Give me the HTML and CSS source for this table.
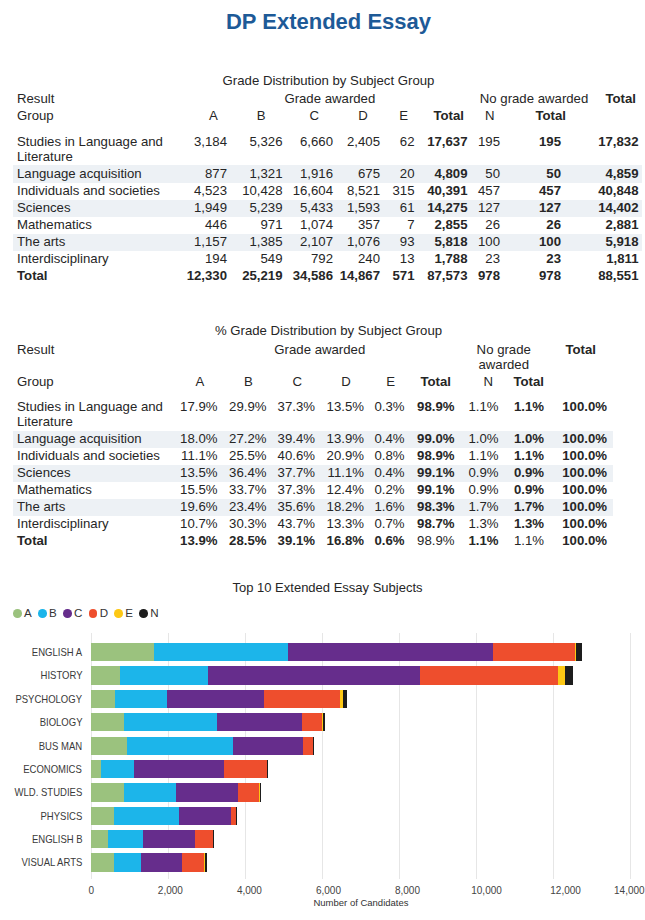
FILE: index.html
```html
<!DOCTYPE html>
<html lang="en">
<head>
<meta charset="utf-8">
<title>DP Extended Essay</title>
<link rel="stylesheet" href="styles.css">
</head>
<body>
<h1 class="title">DP Extended Essay</h1>

<div class="caption cap1">Grade Distribution by Subject Group</div>
<div class="tbl t1">
  <div class="row head1">
    <div class="lbl">Result</div>
    <div class="span6 ga">Grade awarded</div>
    <div class="span2 ng1">No grade awarded</div>
    <div class="ht gt">Total</div>
  </div>
  <div class="row">
    <div class="lbl">Group</div>
    <div class="hc">A</div><div class="hc">B</div><div class="hc">C</div><div class="hc">D</div><div class="hc">E</div>
    <div class="ht">Total</div><div class="hn">N</div><div class="ht over">Total</div><div></div>
  </div>
  <div class="row first">
    <div class="lbl">Studies in Language and Literature</div>
    <div class="num">3,184</div><div class="num">5,326</div><div class="num">6,660</div><div class="num">2,405</div><div class="num">62</div>
    <div class="num b">17,637</div><div class="num">195</div><div class="num b">195</div><div class="num b">17,832</div>
  </div>
  <div class="row shade">
    <div class="lbl">Language acquisition</div>
    <div class="num">877</div><div class="num">1,321</div><div class="num">1,916</div><div class="num">675</div><div class="num">20</div>
    <div class="num b">4,809</div><div class="num">50</div><div class="num b">50</div><div class="num b">4,859</div>
  </div>
  <div class="row">
    <div class="lbl">Individuals and societies</div>
    <div class="num">4,523</div><div class="num">10,428</div><div class="num">16,604</div><div class="num">8,521</div><div class="num">315</div>
    <div class="num b">40,391</div><div class="num">457</div><div class="num b">457</div><div class="num b">40,848</div>
  </div>
  <div class="row shade">
    <div class="lbl">Sciences</div>
    <div class="num">1,949</div><div class="num">5,239</div><div class="num">5,433</div><div class="num">1,593</div><div class="num">61</div>
    <div class="num b">14,275</div><div class="num">127</div><div class="num b">127</div><div class="num b">14,402</div>
  </div>
  <div class="row">
    <div class="lbl">Mathematics</div>
    <div class="num">446</div><div class="num">971</div><div class="num">1,074</div><div class="num">357</div><div class="num">7</div>
    <div class="num b">2,855</div><div class="num">26</div><div class="num b">26</div><div class="num b">2,881</div>
  </div>
  <div class="row shade">
    <div class="lbl">The arts</div>
    <div class="num">1,157</div><div class="num">1,385</div><div class="num">2,107</div><div class="num">1,076</div><div class="num">93</div>
    <div class="num b">5,818</div><div class="num">100</div><div class="num b">100</div><div class="num b">5,918</div>
  </div>
  <div class="row">
    <div class="lbl">Interdisciplinary</div>
    <div class="num">194</div><div class="num">549</div><div class="num">792</div><div class="num">240</div><div class="num">13</div>
    <div class="num b">1,788</div><div class="num">23</div><div class="num b">23</div><div class="num b">1,811</div>
  </div>
  <div class="row">
    <div class="lbl b">Total</div>
    <div class="num b">12,330</div><div class="num b">25,219</div><div class="num b">34,586</div><div class="num b">14,867</div><div class="num b">571</div>
    <div class="num b">87,573</div><div class="num b">978</div><div class="num b">978</div><div class="num b">88,551</div>
  </div>
</div>

<div class="caption cap2">% Grade Distribution by Subject Group</div>
<div class="tbl t2">
  <div class="row head1">
    <div class="lbl">Result</div>
    <div class="span6 ga">Grade awarded</div>
    <div class="span2 ng2">No grade awarded</div>
    <div class="hc gt b">Total</div>
  </div>
  <div class="row">
    <div class="lbl">Group</div>
    <div class="hc">A</div><div class="hc">B</div><div class="hc">C</div><div class="hc">D</div><div class="hc">E</div>
    <div class="ht">Total</div><div class="hn">N</div><div class="ht flush">Total</div><div></div>
  </div>
  <div class="row first">
    <div class="lbl">Studies in Language and Literature</div>
    <div class="num">17.9%</div><div class="num">29.9%</div><div class="num">37.3%</div><div class="num">13.5%</div><div class="num">0.3%</div>
    <div class="num b">98.9%</div><div class="num">1.1%</div><div class="num b">1.1%</div><div class="num b">100.0%</div>
  </div>
  <div class="row shade">
    <div class="lbl">Language acquisition</div>
    <div class="num">18.0%</div><div class="num">27.2%</div><div class="num">39.4%</div><div class="num">13.9%</div><div class="num">0.4%</div>
    <div class="num b">99.0%</div><div class="num">1.0%</div><div class="num b">1.0%</div><div class="num b">100.0%</div>
  </div>
  <div class="row">
    <div class="lbl">Individuals and societies</div>
    <div class="num">11.1%</div><div class="num">25.5%</div><div class="num">40.6%</div><div class="num">20.9%</div><div class="num">0.8%</div>
    <div class="num b">98.9%</div><div class="num">1.1%</div><div class="num b">1.1%</div><div class="num b">100.0%</div>
  </div>
  <div class="row shade">
    <div class="lbl">Sciences</div>
    <div class="num">13.5%</div><div class="num">36.4%</div><div class="num">37.7%</div><div class="num">11.1%</div><div class="num">0.4%</div>
    <div class="num b">99.1%</div><div class="num">0.9%</div><div class="num b">0.9%</div><div class="num b">100.0%</div>
  </div>
  <div class="row">
    <div class="lbl">Mathematics</div>
    <div class="num">15.5%</div><div class="num">33.7%</div><div class="num">37.3%</div><div class="num">12.4%</div><div class="num">0.2%</div>
    <div class="num b">99.1%</div><div class="num">0.9%</div><div class="num b">0.9%</div><div class="num b">100.0%</div>
  </div>
  <div class="row shade">
    <div class="lbl">The arts</div>
    <div class="num">19.6%</div><div class="num">23.4%</div><div class="num">35.6%</div><div class="num">18.2%</div><div class="num">1.6%</div>
    <div class="num b">98.3%</div><div class="num">1.7%</div><div class="num b">1.7%</div><div class="num b">100.0%</div>
  </div>
  <div class="row">
    <div class="lbl">Interdisciplinary</div>
    <div class="num">10.7%</div><div class="num">30.3%</div><div class="num">43.7%</div><div class="num">13.3%</div><div class="num">0.7%</div>
    <div class="num b">98.7%</div><div class="num">1.3%</div><div class="num b">1.3%</div><div class="num b">100.0%</div>
  </div>
  <div class="row">
    <div class="lbl b">Total</div>
    <div class="num b">13.9%</div><div class="num b">28.5%</div><div class="num b">39.1%</div><div class="num b">16.8%</div><div class="num b">0.6%</div>
    <div class="num">98.9%</div><div class="num b">1.1%</div><div class="num">1.1%</div><div class="num b">100.0%</div>
  </div>
</div>

<div class="chart-title">Top 10 Extended Essay Subjects</div>
<div class="legend">
  <div class="item"><span class="dot sa"></span>A</div>
  <div class="item"><span class="dot sb"></span>B</div>
  <div class="item"><span class="dot sc"></span>C</div>
  <div class="item"><span class="dot sd"></span>D</div>
  <div class="item"><span class="dot se"></span>E</div>
  <div class="item"><span class="dot sn"></span>N</div>
</div>

<div class="plot">
  <div class="cat"><span>ENGLISH A</span></div>
  <div class="bar"><span class="sa" style="width:11.614%"></span><span class="sb" style="width:24.829%"></span><span class="sc" style="width:37.986%"></span><span class="sd" style="width:15.2%"></span><span class="se" style="width:0.307%"></span><span class="sn" style="width:1.121%"></span></div>
  <div class="cat"><span>HISTORY</span></div>
  <div class="bar"><span class="sa" style="width:5.257%"></span><span class="sb" style="width:16.307%"></span><span class="sc" style="width:39.464%"></span><span class="sd" style="width:25.5%"></span><span class="se" style="width:1.243%"></span><span class="sn" style="width:1.607%"></span></div>
  <div class="cat"><span>PSYCHOLOGY</span></div>
  <div class="bar"><span class="sa" style="width:4.393%"></span><span class="sb" style="width:9.693%"></span><span class="sc" style="width:17.914%"></span><span class="sd" style="width:14.143%"></span><span class="se" style="width:0.55%"></span><span class="sn" style="width:0.807%"></span></div>
  <div class="cat"><span>BIOLOGY</span></div>
  <div class="bar"><span class="sa" style="width:6%"></span><span class="sb" style="width:17.236%"></span><span class="sc" style="width:15.807%"></span><span class="sd" style="width:3.7%"></span><span class="se" style="width:0.143%"></span><span class="sn" style="width:0.357%"></span></div>
  <div class="cat"><span>BUS MAN</span></div>
  <div class="bar"><span class="sa" style="width:6.614%"></span><span class="sb" style="width:19.643%"></span><span class="sc" style="width:13.029%"></span><span class="sd" style="width:1.736%"></span><span class="se" style="width:0.071%"></span><span class="sn" style="width:0.229%"></span></div>
  <div class="cat"><span>ECONOMICS</span></div>
  <div class="bar"><span class="sa" style="width:1.85%"></span><span class="sb" style="width:6.007%"></span><span class="sc" style="width:16.729%"></span><span class="sd" style="width:7.907%"></span><span class="se" style="width:0.043%"></span><span class="sn" style="width:0.143%"></span></div>
  <div class="cat"><span>WLD. STUDIES</span></div>
  <div class="bar"><span class="sa" style="width:6.057%"></span><span class="sb" style="width:9.636%"></span><span class="sc" style="width:11.429%"></span><span class="sd" style="width:4.007%"></span><span class="se" style="width:0.071%"></span><span class="sn" style="width:0.243%"></span></div>
  <div class="cat"><span>PHYSICS</span></div>
  <div class="bar"><span class="sa" style="width:4.15%"></span><span class="sb" style="width:12.1%"></span><span class="sc" style="width:9.636%"></span><span class="sd" style="width:0.864%"></span><span class="se" style="width:0.057%"></span><span class="sn" style="width:0.193%"></span></div>
  <div class="cat"><span>ENGLISH B</span></div>
  <div class="bar"><span class="sa" style="width:3.093%"></span><span class="sb" style="width:6.429%"></span><span class="sc" style="width:9.75%"></span><span class="sd" style="width:3.336%"></span><span class="se" style="width:0.043%"></span><span class="sn" style="width:0.143%"></span></div>
  <div class="cat"><span>VISUAL ARTS</span></div>
  <div class="bar"><span class="sa" style="width:4.15%"></span><span class="sb" style="width:5.057%"></span><span class="sc" style="width:7.6%"></span><span class="sd" style="width:4.021%"></span><span class="se" style="width:0.293%"></span><span class="sn" style="width:0.371%"></span></div>
</div>
<div class="ticks">
  <span>0</span><span>2,000</span><span>4,000</span><span>6,000</span><span>8,000</span><span>10,000</span><span>12,000</span><span>14,000</span>
</div>
<div class="axis-title">Number of Candidates</div>
</body>
</html>
```
FILE: styles.css
```css
* { box-sizing: border-box; }
html, body { margin: 0; padding: 0; }
body {
  font-family: "Liberation Sans", Arial, sans-serif;
  color: #262626;
  background: #fff;
  width: 645px;
}
.title {
  margin: 0;
  padding: 9px 0 0 12px;
  line-height: 26px;
  font-size: 22px;
  font-weight: bold;
  color: #1d5a97;
  text-align: center;
}
.caption {
  font-size: 13.2px;
  line-height: 17px;
  text-align: center;
  padding-left: 12px;
}
.cap1 { margin-top: 36.5px; }
.cap2 { margin-top: 37px; }

.tbl { margin-left: 13px; font-size: 13.2px; }
.t1 { width: 629px; }
.t2 { width: 600px; }
.row {
  display: grid;
  line-height: 14.5px;
  padding: 1.3px 0;
}
.t1 .row { grid-template-columns: 173.6px 40.4px 55.5px 50.5px 47px 34.5px 53px 32.5px 61px 77.5px 3.5px; }
.t2 .row { grid-template-columns: 156.5px 48px 49px 48.5px 49px 40.5px 50px 44px 45.5px 63px 6px; }
.row.head1 { margin-top: 2.6px; }
.row.first { margin-top: 8.6px; }
.row.shade { background: #edf1f5; }
.lbl { padding-left: 4px; }
.num { text-align: right; white-space: nowrap; }
.b { font-weight: bold; }
.hc { text-align: center; padding-left: 13px; }
.ht { text-align: right; font-weight: bold; padding-right: 3.5px; }
.ht.flush { padding-right: 0; }
.ht.over { padding-right: 0; margin-right: -5px; }
.t1 .gt { padding-right: 2.5px; }
.t2 .gt { padding-left: 10.5px; }
.hn { text-align: right; padding-right: 5.5px; }
.span6 { grid-column: span 6; }
.span2 { grid-column: span 2; }
.ga { text-align: center; padding-left: 5.6px; }
.t2 .ga { padding-left: 15.6px; }
.ng1 { text-align: left; padding-left: 12.3px; white-space: nowrap; }
.ng2 { text-align: center; padding-left: 9px; }

.chart-title {
  margin-top: 29.8px;
  font-size: 13px;
  line-height: 16px;
  text-align: center;
  padding-left: 10px;
}
.legend {
  display: flex;
  gap: 6.2px;
  margin-top: 10.2px;
  padding-left: 13px;
  font-size: 11.6px;
  line-height: 14px;
  color: #333;
}
.legend .item { display: flex; align-items: center; gap: 2.4px; }
.dot { width: 8.7px; height: 8.7px; border-radius: 50%; display: inline-block; }

.plot {
  margin-top: 13.2px;
  display: grid;
  grid-template-columns: 91.3px 539.4px;
  row-gap: 5.08px;
  padding: 9.6px 0 7px;
  background: repeating-linear-gradient(90deg, #e6e6e6 0 1px, transparent 1px 77.057px) 90.8px 0 / 541px 100% no-repeat;
}
.cat {
  font-size: 11px;
  line-height: 18.3px;
  text-align: right;
  padding-right: 9px;
  color: #3a3a3a;
  white-space: nowrap;
}
.cat span {
  display: inline-block;
  transform: scaleX(0.865);
  transform-origin: 100% 50%;
}
.bar { display: flex; height: 18.3px; }
.bar span { height: 100%; }
.sa { background: #9bc27e; }
.sb { background: #1cb5ea; }
.sc { background: #662d8c; }
.sd { background: #ee4e2d; }
.se { background: #fdc815; }
.sn { background: #1d1d1d; }

.ticks {
  display: flex;
  justify-content: space-between;
  margin-left: 91.3px;
  width: 539.4px;
  margin-top: 6px;
  font-size: 10px;
  line-height: 12px;
  color: #444;
}
.ticks span { width: 0; display: flex; justify-content: center; white-space: nowrap; }
.ticks span:last-child { justify-content: flex-end; margin-right: -14px; }
.axis-title {
  margin-left: 91.3px;
  width: 539.4px;
  margin-top: 0.7px;
  text-align: center;
  font-size: 9.5px;
  line-height: 12px;
  color: #333;
}
```
